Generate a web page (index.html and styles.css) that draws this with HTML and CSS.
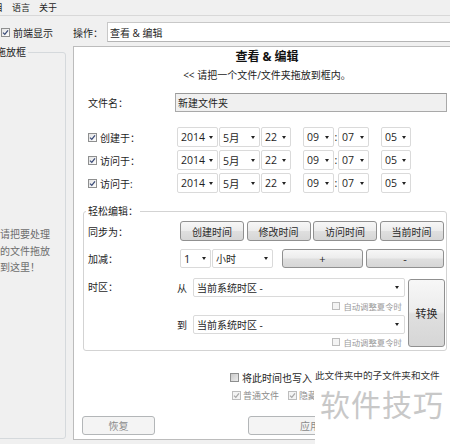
FILE: index.html
```html
<!DOCTYPE html>
<html>
<head>
<meta charset="utf-8">
<link rel="stylesheet" href="styles.css">
</head>
<body>
<div class="menubar"><span>项目</span><span>语言</span><span>关于</span></div>
<div class="toolbar">
  <div class="topcb"><span class="cb"><svg viewBox="0 0 7 7"><path d="M1 3.6 L2.8 5.4 L6 1.4"/></svg></span><span>前端显示</span></div>
  <div class="oplabel">操作：</div>
  <div class="opsel">查看 &amp; 编辑</div>
</div>
<div class="main">
  <fieldset class="dropbox">
    <legend>拖放框</legend>
    <div class="droptext">请把要处理<br>的文件拖放<br>到这里！</div>
  </fieldset>
  <div class="panel">
    <div class="ptitle">查看 &amp; 编辑</div>
    <div class="psub">&lt;&lt; 请把一个文件/文件夹拖放到框内。</div>
    <div class="frow">
      <div class="flabel">文件名：</div>
      <div class="finput">新建文件夹</div>
    </div>
    <div class="drow first">
      <div class="dlabel"><span class="cb"><svg viewBox="0 0 7 7"><path d="M1 3.6 L2.8 5.4 L6 1.4"/></svg></span><span>创建于：</span></div>
      <div class="sel y">2014<span class="arr"></span></div>
      <div class="sel m">5月<span class="arr"></span></div>
      <div class="sel d">22<span class="arr"></span></div>
      <div class="sel h">09<span class="arr"></span></div>
      <div class="colon">:</div>
      <div class="sel mi">07<span class="arr"></span></div>
      <div class="sel s">05<span class="arr"></span></div>
    </div>
    <div class="drow">
      <div class="dlabel"><span class="cb"><svg viewBox="0 0 7 7"><path d="M1 3.6 L2.8 5.4 L6 1.4"/></svg></span><span>访问于：</span></div>
      <div class="sel y">2014<span class="arr"></span></div>
      <div class="sel m">5月<span class="arr"></span></div>
      <div class="sel d">22<span class="arr"></span></div>
      <div class="sel h">09<span class="arr"></span></div>
      <div class="colon">:</div>
      <div class="sel mi">07<span class="arr"></span></div>
      <div class="sel s">05<span class="arr"></span></div>
    </div>
    <div class="drow">
      <div class="dlabel"><span class="cb"><svg viewBox="0 0 7 7"><path d="M1 3.6 L2.8 5.4 L6 1.4"/></svg></span><span>访问于:</span></div>
      <div class="sel y">2014<span class="arr"></span></div>
      <div class="sel m">5月<span class="arr"></span></div>
      <div class="sel d">22<span class="arr"></span></div>
      <div class="sel h">09<span class="arr"></span></div>
      <div class="colon">:</div>
      <div class="sel mi">07<span class="arr"></span></div>
      <div class="sel s">05<span class="arr"></span></div>
    </div>
    <fieldset class="group">
      <legend>轻松编辑：</legend>
      <div class="ginner">
        <div class="srow">
          <div class="glabel">同步为：</div>
          <div class="btns4">
            <div class="btn">创建时间</div>
            <div class="btn">修改时间</div>
            <div class="btn">访问时间</div>
            <div class="btn">当前时间</div>
          </div>
        </div>
        <div class="arow">
          <div class="glabel">加减：</div>
          <div class="sel n">1<span class="arr"></span></div>
          <div class="sel u">小时<span class="arr"></span></div>
          <div class="btn plus">+</div>
          <div class="btn minus">-</div>
        </div>
        <div class="zrow">
          <div class="zlabel">时区：</div>
          <div class="zcol">
            <div class="zline"><span class="zft">从</span><div class="sel z">当前系统时区 -<span class="arr"></span></div></div>
            <div class="cbline"><span class="cb dis"></span><span>自动调整夏令时</span></div>
            <div class="zline"><span class="zft">到</span><div class="sel z">当前系统时区 -<span class="arr"></span></div></div>
            <div class="cbline last"><span class="cb dis"></span><span>自动调整夏令时</span></div>
          </div>
          <div class="btn conv">转换</div>
        </div>
      </div>
    </fieldset>
    <div class="wrow"><span class="cb off"></span><span>将此时间也写入</span></div>
    <div class="orow">
      <span class="cb dis"><svg viewBox="0 0 7 7"><path d="M1 3.6 L2.8 5.4 L6 1.4"/></svg></span><span class="otext">普通文件</span>
      <span class="cb dis"><svg viewBox="0 0 7 7"><path d="M1 3.6 L2.8 5.4 L6 1.4"/></svg></span><span class="otext">隐藏</span>
    </div>
    <div class="brow">
      <div class="btn disabled restore">恢复</div>
      <div class="btn disabled apply"><span class="applytxt">应用</span></div>
    </div>
  </div>
</div>
<div class="watermark">
  <div class="wmsmall">此文件夹中的子文件夹和文件</div>
  <div class="wmbig">软件技巧</div>
</div>
</body>
</html>
```
FILE: styles.css
```css
html, body {
  margin: 0;
}
body {
  width: 450px;
  height: 444px;
  overflow: hidden;
  position: relative;
  background: #f0f0f0;
  font-family: "Open Sans", "Noto Sans CJK SC", sans-serif;
  font-size: 10px;
  color: #1e1e1e;
}
.menubar {
  height: 15px;
  border-bottom: 1px solid #d8d8d8;
  margin-left: -15px;
  display: flex;
  align-items: center;
  gap: 9px;
  font-size: 9px;
  line-height: 15px;
}
.toolbar {
  display: flex;
  align-items: center;
  height: 20px;
  margin-top: 6px;
}
.topcb {
  width: 73px;
  flex: none;
  box-sizing: border-box;
  padding-left: 1px;
  display: flex;
  align-items: center;
  gap: 3px;
}
.oplabel {
  width: 34px;
  flex: none;
}
.opsel {
  flex: 1;
  height: 20px;
  box-sizing: border-box;
  border: 1px solid #c8c8c8;
  border-bottom-color: #b4b4b4;
  border-right: none;
  background: #fff;
  padding-left: 2px;
  display: flex;
  align-items: center;
}
.cb {
  display: inline-flex;
  align-items: center;
  justify-content: center;
  flex: none;
  width: 9px;
  height: 9px;
  box-sizing: border-box;
  border: 1px solid #8e8f8f;
  background: linear-gradient(135deg, #e4e4e4, #fdfdfd);
}
.cb svg {
  width: 7px;
  height: 7px;
}
.cb path {
  fill: none;
  stroke: #3a4b78;
  stroke-width: 1.3;
}
.cb.dis {
  border-color: #bdbdbd;
  background: #f4f4f4;
}
.cb.dis path {
  stroke: #a9a9a9;
}
.cb.off {
  background: linear-gradient(135deg, #c9c9c9, #ececec);
}
.main {
  display: flex;
  margin-top: 4px;
  height: 394px;
}
.dropbox {
  margin: 0 0 0 -10px;
  padding: 0;
  min-width: 0;
  width: 76px;
  height: 393px;
  box-sizing: border-box;
  flex: none;
  border: 1px solid #d5d9dc;
  border-radius: 3px;
}
.dropbox legend {
  margin-left: 3px;
  padding: 0 2px;
  line-height: 12px;
  font-size: 10px;
}
.droptext {
  margin-top: 168px;
  padding-left: 9px;
  line-height: 16.5px;
  color: #6d6d6d;
  white-space: nowrap;
}
.panel {
  flex: none;
  margin-left: 7px;
  width: 388px;
  height: 394px;
  box-sizing: border-box;
  border: 1px solid #bcbcbc;
  background: #fff;
  padding-left: 14px;
}
.ptitle {
  margin: 3px 0 0 -14px;
  text-align: center;
  font-weight: bold;
  font-size: 12px;
  line-height: 14px;
  color: #111;
}
.psub {
  margin: 5px 0 0 -14px;
  text-align: center;
  line-height: 12px;
  color: #222;
}
.frow {
  display: flex;
  align-items: center;
  margin-top: 12px;
  height: 19px;
}
.flabel {
  width: 87px;
  flex: none;
}
.finput {
  width: 272px;
  height: 19px;
  box-sizing: border-box;
  border: 1px solid #a9a9a9;
  border-top-color: #9a9a9a;
  background: #f0f0f0;
  padding-left: 2px;
  display: flex;
  align-items: center;
}
.drow {
  display: flex;
  align-items: center;
  height: 20px;
  margin-top: 3px;
}
.drow.first {
  margin-top: 15px;
}
.dlabel {
  width: 89px;
  flex: none;
  display: flex;
  align-items: center;
  gap: 3px;
}
.sel {
  flex: none;
  height: 20px;
  box-sizing: border-box;
  border: 1px solid #dadada;
  border-radius: 2px;
  background: #fff;
  display: flex;
  align-items: center;
  justify-content: space-between;
  padding: 0 4px 0 3px;
  font-size: 10.5px;
}
.arr {
  width: 0;
  height: 0;
  border-left: 2.5px solid transparent;
  border-right: 2.5px solid transparent;
  border-top: 3px solid #222;
}
.sel.y { width: 41px; }
.sel.m { width: 41px; margin-left: 1px; }
.sel.d { width: 30px; margin-left: 1px; }
.sel.h { width: 31px; margin-left: 12px; }
.colon {
  width: 4px;
  text-align: center;
  font-size: 10.5px;
}
.sel.mi { width: 31px; }
.sel.s { width: 30px; margin-left: 12px; }
.group {
  margin: 12px 0 0 -5px;
  padding: 0;
  min-width: 0;
  width: 364px;
  height: 146px;
  box-sizing: border-box;
  border: 1px solid #d3d3d3;
  border-radius: 3px;
}
.group legend {
  margin-left: 2px;
  padding: 0 2px;
  line-height: 12px;
  font-size: 10px;
}
.ginner {
  padding-left: 4px;
}
.srow {
  display: flex;
  align-items: center;
  margin-top: 4px;
  height: 20px;
}
.glabel {
  width: 92px;
  flex: none;
}
.btns4 {
  display: grid;
  grid-template-columns: repeat(4, 64px);
  column-gap: 2.5px;
  height: 20px;
}
.btn {
  box-sizing: border-box;
  border: 1px solid #909090;
  border-radius: 3px;
  background: linear-gradient(#f7f7f7, #ececec 48%, #dfdfdf 52%, #d6d6d6);
  display: flex;
  align-items: center;
  justify-content: center;
  color: #2a2a2a;
}
.arow {
  display: flex;
  align-items: center;
  margin-top: 8px;
  height: 19px;
}
.arow .sel {
  height: 19px;
}
.sel.n { width: 31px; font-size: 11px; }
.sel.u { width: 61px; margin-left: 1px; font-size: 10px; }
.btn.plus { width: 81px; height: 19px; margin-left: 9px; font-size: 11px; }
.btn.minus { width: 78px; height: 19px; margin-left: 3px; font-size: 11px; }
.zrow {
  display: flex;
  align-items: flex-start;
  margin-top: 10px;
}
.zlabel {
  width: 89px;
  flex: none;
  line-height: 19px;
}
.zcol {
  width: 228px;
  flex: none;
}
.zline {
  display: flex;
  align-items: center;
  height: 19px;
}
.zft {
  width: 16px;
  flex: none;
}
.sel.z {
  width: 212px;
  height: 19px;
  font-size: 10px;
  padding-right: 5px;
}
.cbline {
  height: 18px;
  display: flex;
  align-items: center;
  justify-content: flex-end;
  gap: 3px;
  padding-right: 3px;
  font-size: 8.4px;
  color: #9b9b9b;
}
.cbline.last {
  height: 15px;
}
.cbline .cb {
  width: 8px;
  height: 8px;
}
.btn.conv {
  width: 37px;
  height: 68px;
  margin: 1px 0 0 3px;
  font-size: 11px;
}
.wrow {
  display: flex;
  align-items: center;
  gap: 3px;
  margin: 20px 0 0 142px;
  height: 12px;
  white-space: nowrap;
}
.orow {
  display: flex;
  align-items: center;
  margin: 6px 0 0 144px;
  width: 82px;
  overflow: hidden;
  height: 12px;
  white-space: nowrap;
  font-size: 9px;
  color: #8d8d8d;
}
.otext {
  margin: 0 9px 0 2px;
}
.brow {
  display: flex;
  margin-top: 15px;
  height: 19px;
}
.btn.disabled {
  border-color: #b3b6b8;
  background: #f4f4f4;
  color: #8a8a8a;
}
.btn.restore {
  width: 73px;
  margin-left: -6px;
}
.btn.apply {
  width: 124px;
  margin-left: 93px;
}
.watermark {
  position: absolute;
  left: 315px;
  top: 371px;
  width: 135px;
  height: 73px;
  background: #fff;
  overflow: hidden;
}
.wmsmall {
  font-size: 9.6px;
  line-height: 10px;
  color: #333;
  white-space: nowrap;
}
.wmbig {
  margin-top: 9px;
  padding-left: 5px;
  font-size: 30px;
  line-height: 30px;
  letter-spacing: 1px;
  color: #c8c8c8;
  white-space: nowrap;
}
```
